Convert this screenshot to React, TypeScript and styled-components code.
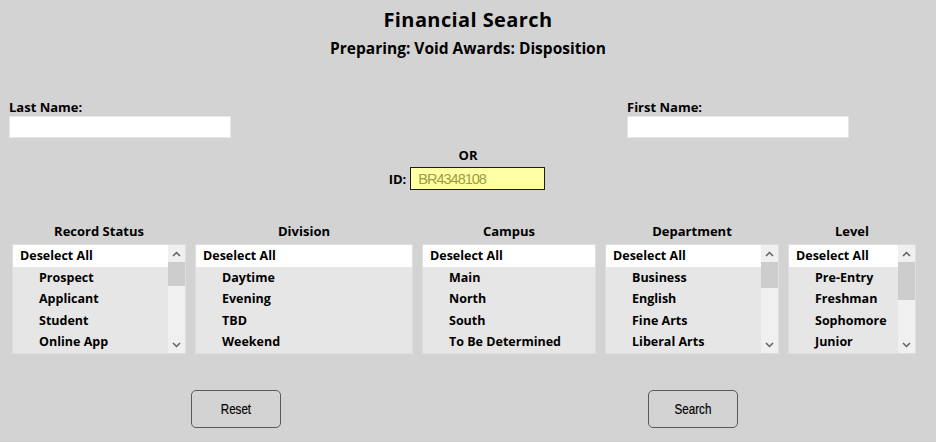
import { Fragment } from "react";
import styled, { createGlobalStyle } from "styled-components";

const GlobalStyle = createGlobalStyle`
  body {
    margin: 0;
    background-color: #d3d3d3;
    font-family: "Open Sans", "DejaVu Sans", sans-serif;
    font-weight: 700;
    color: #000;
  }
`;

const Page = styled.div`
  width: 936px;
  height: 442px;
  overflow: hidden;
`;

const Header = styled.header`
  text-align: center;
  padding-top: 6px;
`;

const Title = styled.h1`
  margin: 0;
  font-size: 20px;
  line-height: 27px;
  font-weight: 700;
  letter-spacing: 0.4px;
`;

const Subtitle = styled.h2`
  margin: 4px 0 0;
  font-size: 15.5px;
  line-height: 22px;
  font-weight: 700;
`;

const NameRow = styled.div`
  display: flex;
  justify-content: space-between;
  padding: 0 87px 0 9px;
  margin-top: 39px;
`;

const Field = styled.div`
  display: flex;
  flex-direction: column;
`;

const Label = styled.label`
  font-size: 13px;
  line-height: 18px;
`;

const TextInput = styled.input`
  box-sizing: border-box;
  width: 222px;
  height: 22px;
  border: 1px solid #e6e6e6;
  background: #fff;
  margin: 0;
  outline: none;
`;

const OrBlock = styled.div`
  display: flex;
  flex-direction: column;
  align-items: center;
  margin-top: 8px;
`;

const OrText = styled.span`
  font-size: 13px;
  line-height: 18px;
`;

const IdRow = styled.div`
  display: flex;
  align-items: center;
  gap: 4px;
  margin-top: 3px;
  margin-left: -2px;
`;

const IdInput = styled.input`
  box-sizing: border-box;
  width: 135px;
  height: 23px;
  margin: 0;
  padding: 0 0 0 7px;
  border: 1px solid #1c1c1c;
  background: #ffffa6;
  color: #9d9d3f;
  font-family: "Liberation Sans", Arial, sans-serif;
  font-weight: 400;
  font-size: 14.5px;
  letter-spacing: -1px;
  outline: none;
`;

const ListRow = styled.div`
  display: flex;
  gap: 9px;
  padding-left: 12px;
  margin-top: 32px;
`;

const ListColumn = styled.div<{ $width: number }>`
  display: flex;
  flex-direction: column;
  width: ${({ $width }) => $width}px;
`;

const ListHeading = styled.div`
  text-align: center;
  font-size: 13px;
  line-height: 18px;
  margin-bottom: 4px;
`;

const ListBox = styled.div`
  display: flex;
  height: 108px;
  border: 1px solid #dedede;
  background: #e6e6e6;
  overflow: hidden;
`;

const Options = styled.ul`
  flex: 1;
  margin: 0;
  padding: 0;
  list-style: none;
`;

const Option = styled.li<{ $header?: boolean }>`
  height: 21.5px;
  line-height: 21.5px;
  font-size: 12.5px;
  white-space: nowrap;
  padding-left: ${({ $header }) => ($header ? 7 : 26)}px;
  background: ${({ $header }) => ($header ? "#fff" : "transparent")};
`;

const Scrollbar = styled.div`
  display: flex;
  flex-direction: column;
  width: 17px;
  background: #f0f0f0;
`;

const ArrowButton = styled.div`
  display: flex;
  align-items: center;
  justify-content: center;
  height: 17px;
`;

const Track = styled.div`
  flex: 1;
`;

const Thumb = styled.div<{ $size: number }>`
  height: ${({ $size }) => $size}px;
  background: #cdcdcd;
`;

const ButtonRow = styled.div`
  display: flex;
  gap: 367px;
  padding-left: 191px;
  margin-top: 36px;
`;

const ActionButton = styled.button`
  box-sizing: border-box;
  display: flex;
  align-items: center;
  justify-content: center;
  width: 90px;
  height: 38px;
  padding: 0;
  border: 1px solid #5a5a5a;
  border-radius: 5px;
  background: transparent;
  color: #000;
  font-family: "Liberation Sans", Arial, sans-serif;
  font-weight: 400;
  font-size: 14.5px;
  cursor: pointer;
`;

const NarrowText = styled.span`
  display: inline-block;
  transform: scaleX(0.8);
  -webkit-text-stroke: 0.2px #000;
`;

const Chevron = ({ up }: { up?: boolean }) => (
  <svg width="9" height="6" viewBox="0 0 9 6">
    <path
      d={up ? "M1 5 L4.5 1.5 L8 5" : "M1 1 L4.5 4.5 L8 1"}
      fill="none"
      stroke="#606060"
      strokeWidth="1.5"
    />
  </svg>
);

interface ListDef {
  title: string;
  width: number;
  items: string[];
  thumb?: number;
}

const lists: ListDef[] = [
  { title: "Record Status", width: 174, items: ["Prospect", "Applicant", "Student", "Online App"], thumb: 24 },
  { title: "Division", width: 218, items: ["Daytime", "Evening", "TBD", "Weekend"] },
  { title: "Campus", width: 174, items: ["Main", "North", "South", "To Be Determined"] },
  { title: "Department", width: 174, items: ["Business", "English", "Fine Arts", "Liberal Arts"], thumb: 26 },
  { title: "Level", width: 128, items: ["Pre-Entry", "Freshman", "Sophomore", "Junior"], thumb: 38 },
];

const App = () => {
  return (
    <Fragment>
      <GlobalStyle />
      <Page>
        <Header>
          <Title>Financial Search</Title>
          <Subtitle>Preparing: Void Awards: Disposition</Subtitle>
        </Header>

        <NameRow>
          <Field>
            <Label>Last Name:</Label>
            <TextInput />
          </Field>
          <Field>
            <Label>First Name:</Label>
            <TextInput />
          </Field>
        </NameRow>

        <OrBlock>
          <OrText>OR</OrText>
          <IdRow>
            <Label>ID:</Label>
            <IdInput defaultValue="BR4348108" />
          </IdRow>
        </OrBlock>

        <ListRow>
          {lists.map((list) => (
            <ListColumn key={list.title} $width={list.width}>
              <ListHeading>{list.title}</ListHeading>
              <ListBox>
                <Options>
                  <Option $header>Deselect All</Option>
                  {list.items.map((item) => (
                    <Option key={item}>{item}</Option>
                  ))}
                </Options>
                {list.thumb && (
                  <Scrollbar>
                    <ArrowButton>
                      <Chevron up />
                    </ArrowButton>
                    <Track>
                      <Thumb $size={list.thumb} />
                    </Track>
                    <ArrowButton>
                      <Chevron />
                    </ArrowButton>
                  </Scrollbar>
                )}
              </ListBox>
            </ListColumn>
          ))}
        </ListRow>

        <ButtonRow>
          <ActionButton>
            <NarrowText>Reset</NarrowText>
          </ActionButton>
          <ActionButton>
            <NarrowText>Search</NarrowText>
          </ActionButton>
        </ButtonRow>
      </Page>
    </Fragment>
  );
};

export default App;
